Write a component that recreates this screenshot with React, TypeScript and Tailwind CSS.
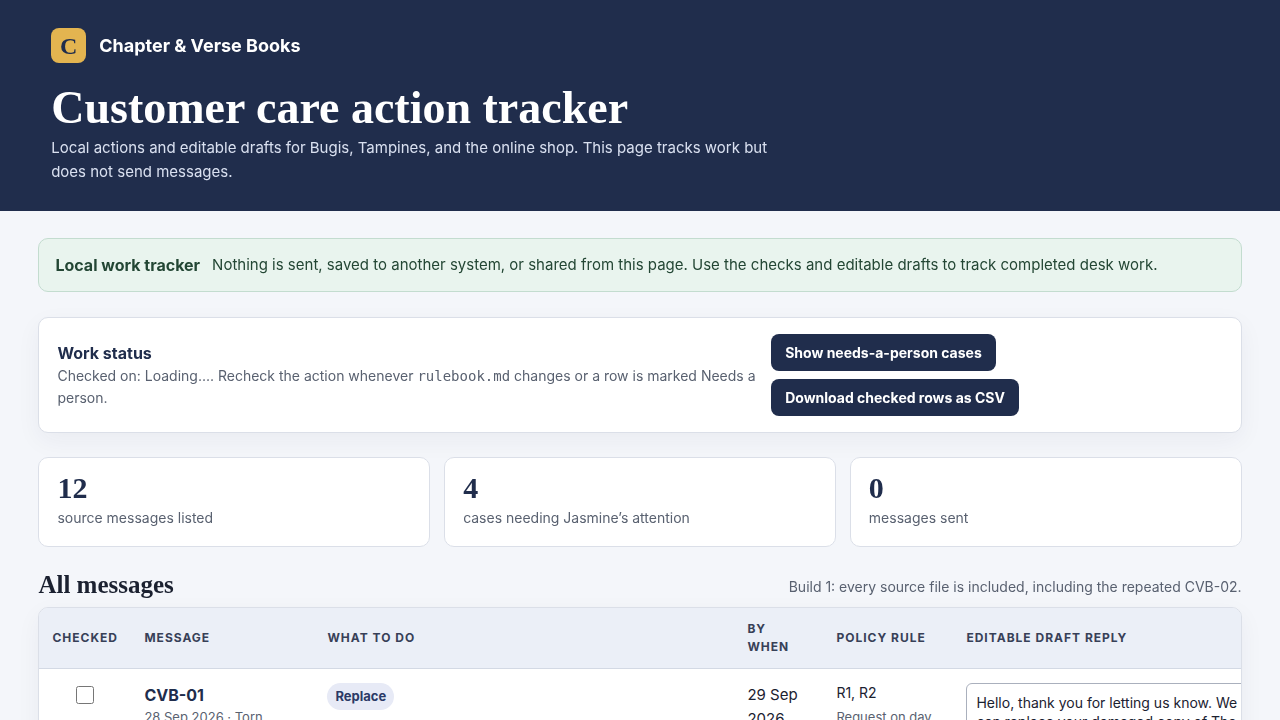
import React from "react";

type Stat = {
  value: number;
  label: string;
};

type MessageRow = {
  id: string;
  meta: string;
  action: string;
  due: string;
  rules: string;
  ruleNote: string;
  draft: string;
};

const stats: Stat[] = [
  { value: 12, label: "source messages listed" },
  { value: 4, label: "cases needing Jasmine’s attention" },
  { value: 0, label: "messages sent" },
];

const columns = [
  { title: "Checked", width: "w-[92px]" },
  { title: "Message", width: "w-[183px]" },
  { title: "What to do", width: "w-[420px]" },
  { title: "By when", width: "w-[89px]" },
  { title: "Policy rule", width: "w-[130px]" },
  { title: "Editable draft reply", width: "w-[310px]" },
];

const messages: MessageRow[] = [
  {
    id: "CVB-01",
    meta: "28 Sep 2026 · Torn",
    action: "Replace",
    due: "29 Sep 2026",
    rules: "R1, R2",
    ruleNote: "Request on day",
    draft:
      "Hello, thank you for letting us know. We can replace your damaged copy of The",
  },
];

const ActionButton: React.FC<{ children: React.ReactNode }> = ({
  children,
}) => {
  return (
    <button
      type="button"
      className="h-[37px] px-[14px] rounded-lg bg-[#202d4c] text-white text-sm font-bold cursor-pointer"
    >
      {children}
    </button>
  );
};

const StatCard: React.FC<{ data: Stat }> = ({ data }) => {
  return (
    <div className="px-[18px] pt-[14px] pb-[18px] rounded-[10px] border border-[#dbdfe8] bg-white">
      <strong className="block font-['Liberation_Serif',serif] text-3xl leading-8 font-bold text-[#202d4c]">
        {data.value}
      </strong>
      <span className="block mt-1 text-sm text-[#596170]">{data.label}</span>
    </div>
  );
};

const MessageTableRow: React.FC<{ data: MessageRow }> = ({ data }) => {
  return (
    <tr className="align-top">
      <td className="px-[13px] pt-[17px] text-center">
        <input
          type="checkbox"
          aria-label={`Mark ${data.id} as checked`}
          className="size-[18px]"
        />
      </td>
      <td className="px-[13px] py-[14px]">
        <strong className="block leading-6 text-[#202d4c]">{data.id}</strong>
        <span className="block text-[13px] leading-5 text-[#596170]">
          {data.meta}
        </span>
      </td>
      <td className="px-[13px] py-[14px]">
        <span className="inline-block px-2 rounded-full bg-[#e7eaf6] text-[13px] leading-[27px] font-bold text-[#2b3a67]">
          {data.action}
        </span>
      </td>
      <td className="pl-[13px] pr-2 py-[14px] text-[15px] leading-6">
        {data.due}
      </td>
      <td className="px-[13px] py-[14px]">
        <span className="block text-sm">{data.rules}</span>
        <span className="block mt-1 text-[13px] leading-5 text-[#596170] whitespace-nowrap">
          {data.ruleNote}
        </span>
      </td>
      <td className="px-[13px] py-[14px]">
        <textarea
          aria-label={`Draft reply for ${data.id}`}
          defaultValue={data.draft}
          rows={6}
          className="block w-full px-[9px] py-[9px] rounded-md border border-[#aab0bd] bg-white text-sm leading-[19px] resize-y"
        />
      </td>
    </tr>
  );
};

const App: React.FC = () => {
  return (
    <div className="min-h-screen bg-[#f4f6fa] font-['Inter',sans-serif] text-[#1b2130]">
      <header className="px-[4%] pt-7 pb-[27px] bg-[#202d4c] text-white">
        <div className="flex items-center gap-[13px]">
          <span className="flex items-center justify-center size-[35px] rounded-lg bg-[#e3b450] font-['Liberation_Serif',serif] text-2xl font-bold text-[#202d4c]">
            C
          </span>
          <span className="text-lg font-bold">Chapter &amp; Verse Books</span>
        </div>
        <h1 className="mt-[21px] font-['Liberation_Serif',serif] text-[46px] leading-[48px] font-bold">
          Customer care action tracker
        </h1>
        <p className="mt-1 max-w-[740px] text-[15px] leading-6 text-[#d9e0f0]">
          Local actions and editable drafts for Bugis, Tampines, and the online
          shop. This page tracks work but does not send messages.
        </p>
      </header>

      <main className="w-[94%] mx-auto pt-[27px]">
        <div className="flex flex-wrap items-center gap-x-3 px-4 py-[14px] rounded-[10px] border border-[#c3dccf] bg-[#e9f4ee] text-[15px] leading-6 text-[#234634]">
          <strong className="text-base">Local work tracker</strong>
          <span>
            Nothing is sent, saved to another system, or shared from this page.
            Use the checks and editable drafts to track completed desk work.
          </span>
        </div>

        <section className="grid grid-cols-[1.55fr_1fr] items-center gap-[14px] mt-[25px] px-[18px] py-4 rounded-[10px] border border-[#dbdfe8] bg-white shadow-[0_8px_24px_rgba(32,45,76,0.05)]">
          <div>
            <h2 className="text-base leading-6 font-bold text-[#202d4c]">
              Work status
            </h2>
            <p className="text-sm leading-[22px] text-[#596170]">
              Checked on: Loading.... Recheck the action whenever{" "}
              <code className="font-['DejaVu_Sans_Mono',monospace]">
                rulebook.md
              </code>{" "}
              changes or a row is marked Needs a person.
            </p>
          </div>
          <div className="flex flex-wrap gap-2">
            <ActionButton>Show needs-a-person cases</ActionButton>
            <ActionButton>Download checked rows as CSV</ActionButton>
          </div>
        </section>

        <section className="grid grid-cols-3 gap-[14px] mt-6">
          {stats.map((item) => {
            return <StatCard key={item.label} data={item} />;
          })}
        </section>

        <div className="flex items-end justify-between gap-4 mt-6">
          <h2 className="font-['Liberation_Serif',serif] text-[25px] leading-7 font-bold">
            All messages
          </h2>
          <p className="text-sm leading-6 text-[#596170]">
            Build 1: every source file is included, including the repeated
            CVB-02.
          </p>
        </div>

        <div className="mt-2 overflow-x-auto rounded-[10px] border border-[#dbdfe8] bg-white shadow-[0_8px_24px_rgba(32,45,76,0.05)]">
          <table className="table-fixed w-full min-w-[1224px] border-collapse text-left">
            <thead className="bg-[#ebeff7]">
              <tr className="border-b border-[#d3d9e4]">
                {columns.map((column) => {
                  return (
                    <th
                      key={column.title}
                      className={`${column.width} px-[13px] py-3 text-xs leading-[18px] font-bold tracking-[1px] uppercase text-[#374057]`}
                    >
                      {column.title}
                    </th>
                  );
                })}
              </tr>
            </thead>
            <tbody>
              {messages.map((item) => {
                return <MessageTableRow key={item.id} data={item} />;
              })}
            </tbody>
          </table>
        </div>
      </main>
    </div>
  );
};

export default App;
